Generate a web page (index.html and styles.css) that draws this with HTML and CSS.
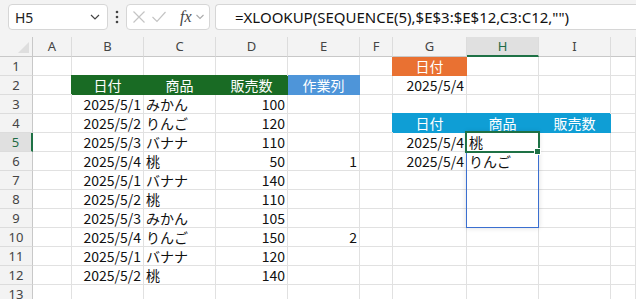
FILE: index.html
```html
<!DOCTYPE html>
<html>
<head>
<link rel="stylesheet" href="styles.css">
</head>
<body>

<div class="window">
    <div class="toolbar">
        <div class="namebox">
            <span>H5</span>
            <svg class="chev" width="12" height="8" viewBox="0 0 12 8"><path d="M2 2 L6 6 L10 2" fill="none" stroke="#444" stroke-width="1.2"/></svg>
        </div>
        <svg class="dots" width="4" height="14" viewBox="0 0 4 14"><circle cx="2" cy="2" r="1.3" fill="#444"/><circle cx="2" cy="7" r="1.3" fill="#444"/><circle cx="2" cy="12" r="1.3" fill="#444"/></svg>
        <div class="fxbox">
            <svg width="14" height="14" viewBox="0 0 14 14"><path d="M1.5 1.5 L12.5 12.5 M12.5 1.5 L1.5 12.5" stroke="#c4c4c4" stroke-width="1.2"/></svg>
            <svg width="16" height="14" viewBox="0 0 16 14"><path d="M1.5 7 L6 11.5 L14.5 2" fill="none" stroke="#c4c4c4" stroke-width="1.2"/></svg>
            <span class="fx">fx</span>
            <svg width="10" height="8" viewBox="0 0 10 8"><path d="M1.5 2 L5 5.5 L8.5 2" fill="none" stroke="#aaa" stroke-width="1.1"/></svg>
        </div>
        <div class="formula">=XLOOKUP(SEQUENCE(5),$E$3:$E$12,C3:C12,"")</div>
    </div>

    <div class="sheet">
        <div class="hd corner"><span class="tri"></span></div>
        <div class="hd">A</div>
        <div class="hd">B</div>
        <div class="hd">C</div>
        <div class="hd">D</div>
        <div class="hd">E</div>
        <div class="hd">F</div>
        <div class="hd">G</div>
        <div class="hd on">H</div>
        <div class="hd">I</div>
        <div class="hd"></div>

        <div class="rh">1</div>
        <div class="c"></div><div class="c"></div><div class="c"></div><div class="c"></div><div class="c"></div><div class="c"></div>
        <div class="c ctr orange">日付</div>
        <div class="c"></div><div class="c"></div><div class="c"></div>

        <div class="rh">2</div>
        <div class="c"></div>
        <div class="c ctr green">日付</div>
        <div class="c ctr green">商品</div>
        <div class="c ctr green">販売数</div>
        <div class="c ctr blue">作業列</div>
        <div class="c"></div>
        <div class="c num">2025/5/4</div>
        <div class="c"></div><div class="c"></div><div class="c"></div>

        <div class="rh">3</div>
        <div class="c"></div>
        <div class="c num">2025/5/1</div>
        <div class="c">みかん</div>
        <div class="c num">100</div>
        <div class="c"></div><div class="c"></div><div class="c"></div><div class="c"></div><div class="c"></div><div class="c"></div>

        <div class="rh">4</div>
        <div class="c"></div>
        <div class="c num">2025/5/2</div>
        <div class="c">りんご</div>
        <div class="c num">120</div>
        <div class="c"></div><div class="c"></div>
        <div class="c ctr aqua">日付</div>
        <div class="c ctr aqua">商品</div>
        <div class="c ctr aqua">販売数</div>
        <div class="c"></div>

        <div class="rh on">5</div>
        <div class="c"></div>
        <div class="c num">2025/5/3</div>
        <div class="c">バナナ</div>
        <div class="c num">110</div>
        <div class="c"></div><div class="c"></div>
        <div class="c num">2025/5/4</div>
        <div class="c">桃</div>
        <div class="c"></div><div class="c"></div>

        <div class="rh">6</div>
        <div class="c"></div>
        <div class="c num">2025/5/4</div>
        <div class="c">桃</div>
        <div class="c num">50</div>
        <div class="c num">1</div>
        <div class="c"></div>
        <div class="c num">2025/5/4</div>
        <div class="c">りんご</div>
        <div class="c"></div><div class="c"></div>

        <div class="rh">7</div>
        <div class="c"></div>
        <div class="c num">2025/5/1</div>
        <div class="c">バナナ</div>
        <div class="c num">140</div>
        <div class="c"></div><div class="c"></div><div class="c"></div><div class="c"></div><div class="c"></div><div class="c"></div>

        <div class="rh">8</div>
        <div class="c"></div>
        <div class="c num">2025/5/2</div>
        <div class="c">桃</div>
        <div class="c num">110</div>
        <div class="c"></div><div class="c"></div><div class="c"></div><div class="c"></div><div class="c"></div><div class="c"></div>

        <div class="rh">9</div>
        <div class="c"></div>
        <div class="c num">2025/5/3</div>
        <div class="c">みかん</div>
        <div class="c num">105</div>
        <div class="c"></div><div class="c"></div><div class="c"></div><div class="c"></div><div class="c"></div><div class="c"></div>

        <div class="rh">10</div>
        <div class="c"></div>
        <div class="c num">2025/5/4</div>
        <div class="c">りんご</div>
        <div class="c num">150</div>
        <div class="c num">2</div>
        <div class="c"></div><div class="c"></div><div class="c"></div><div class="c"></div><div class="c"></div>

        <div class="rh">11</div>
        <div class="c"></div>
        <div class="c num">2025/5/1</div>
        <div class="c">バナナ</div>
        <div class="c num">120</div>
        <div class="c"></div><div class="c"></div><div class="c"></div><div class="c"></div><div class="c"></div><div class="c"></div>

        <div class="rh">12</div>
        <div class="c"></div>
        <div class="c num">2025/5/2</div>
        <div class="c">桃</div>
        <div class="c num">140</div>
        <div class="c"></div><div class="c"></div><div class="c"></div><div class="c"></div><div class="c"></div><div class="c"></div>

        <div class="rh">13</div>
        <div class="c"></div><div class="c"></div><div class="c"></div><div class="c"></div><div class="c"></div><div class="c"></div><div class="c"></div><div class="c"></div><div class="c"></div><div class="c"></div>

        <!-- spill range and active cell -->
        <div class="spill"></div>
        <div class="active"><span class="handle"></span></div>
    </div>
</div>

</body>
</html>
```

FILE: styles.css
```css
body {
    margin: 0;
    padding: 0;
    background-color: #ffffff;
    font-family: "Noto Sans CJK JP", "Noto Sans", sans-serif;
    overflow: hidden;
}

.window {
    width: 636px;
    height: 299px;
    overflow: hidden;
    background-color: #f3f3f3;
}

.toolbar {
    height: 37px;
    display: flex;
    align-items: flex-start;
    padding-top: 4px;
    box-sizing: border-box;
}

.namebox {
    margin-left: 8px;
    width: 100px;
    height: 26px;
    box-sizing: border-box;
    border: 1px solid #d6d6d6;
    border-radius: 4px;
    background-color: white;
    display: flex;
    align-items: center;
    justify-content: space-between;
    padding: 0 6px 0 6px;
    font-family: "Noto Sans", sans-serif;
    font-size: 14px;
    color: #222;
}

.dots {
    margin: 6px 7px 0 7px;
}

.fxbox {
    width: 84px;
    height: 26px;
    box-sizing: border-box;
    border: 1px solid #d6d6d6;
    border-radius: 4px;
    background-color: white;
    display: flex;
    align-items: center;
    gap: 5px;
    padding-left: 5px;
}

.fx {
    font-family: "Liberation Serif", serif;
    font-style: italic;
    font-size: 16px;
    color: #444;
    margin-left: 8px;
    margin-right: -2px;
}

.formula {
    margin-left: 5px;
    flex: 1;
    height: 26px;
    box-sizing: border-box;
    border: 1px solid #d6d6d6;
    border-right: none;
    border-radius: 4px 0 0 4px;
    background-color: white;
    padding-left: 19px;
    font-family: "Noto Sans", sans-serif;
    font-size: 15px;
    line-height: 24px;
    color: #111;
    white-space: nowrap;
}

.sheet {
    position: relative;
    display: grid;
    grid-template-columns: 33px 39px 72px 72px 72px 72px 33px 74px 72px 72px 1fr;
    grid-template-rows: 20px repeat(13, 19px);
    background-color: white;
}

.hd {
    background-color: #f3f3f3;
    border-right: 1px solid #dcdcdc;
    border-bottom: 1px solid #c8c8c8;
    font-family: "Noto Sans", sans-serif;
    font-size: 13px;
    color: #444;
    text-align: center;
    line-height: 19px;
    box-sizing: border-box;
}

.hd.on {
    background-color: #e0e0e0;
    border-bottom: 2px solid #1e7145;
    color: #1e6b45;
}

.corner {
    position: relative;
    border-right: 1px solid #c8c8c8;
}

.tri {
    position: absolute;
    right: 3px;
    bottom: 3px;
    width: 0;
    height: 0;
    border-left: 11px solid transparent;
    border-bottom: 11px solid #dedede;
}

.rh {
    background-color: #f3f3f3;
    border-right: 1px solid #c8c8c8;
    border-bottom: 1px solid #dcdcdc;
    font-family: "Noto Sans", sans-serif;
    font-size: 13px;
    color: #444;
    text-align: center;
    line-height: 18px;
    box-sizing: border-box;
}

.rh.on {
    background-color: #e0e0e0;
    border-right: 2px solid #1e7145;
    color: #1e6b45;
}

.c {
    border-right: 1px solid #e1e1e1;
    border-bottom: 1px solid #e1e1e1;
    box-sizing: border-box;
    font-size: 14px;
    line-height: 18px;
    color: #111;
    padding: 0 2px;
    white-space: nowrap;
    overflow: hidden;
}

.num {
    text-align: right;
}

.ctr {
    text-align: center;
    color: white;
}

.green {
    background-color: #196b24;
    border-color: #196b24;
    box-shadow: -1px -1px 0 #196b24;
}

.blue {
    background-color: #4e95d9;
    border-color: #4e95d9;
    box-shadow: 0 -1px 0 #4e95d9;
}

.orange {
    background-color: #e97132;
    border-color: #e97132;
    box-shadow: -1px 0 0 #e97132;
}

.aqua {
    background-color: #0f9ed5;
    border-color: #0f9ed5;
    box-shadow: -1px -1px 0 #0f9ed5;
}

.spill {
    position: absolute;
    left: 466px;
    top: 95px;
    width: 73px;
    height: 96px;
    box-sizing: border-box;
    border: 1px solid #3b6fd0;
    box-shadow: 0 0 5px rgba(0, 0, 0, 0.15);
}

.active {
    position: absolute;
    left: 465px;
    top: 94px;
    width: 75px;
    height: 22px;
    box-sizing: border-box;
    border: 2px solid #1e7145;
}

.handle {
    position: absolute;
    right: -3px;
    bottom: -4px;
    width: 5px;
    height: 5px;
    background-color: #1e7145;
    border: 1px solid white;
}
```
